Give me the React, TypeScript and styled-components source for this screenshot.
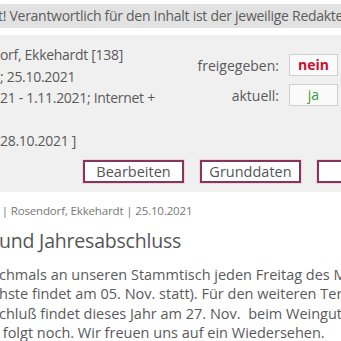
import React from 'react'
import styled, { createGlobalStyle } from 'styled-components'

const GlobalStyle = createGlobalStyle`
  html, body {
    margin: 0;
    padding: 0;
    background: #ffffff;
    overflow: hidden;
  }
  body {
    font-family: 'Open Sans', 'Noto Sans', 'DejaVu Sans', sans-serif;
    color: #5a5a5a;
  }
`

const Page = styled.div`
  width: 341px;
  height: 341px;
  overflow: hidden;
  padding-top: 4px;
  box-sizing: border-box;
`

const Notice = styled.div`
  height: 24px;
  line-height: 24px;
  background: #e2e2e2;
  font-size: 14px;
  letter-spacing: -0.28px;
  white-space: nowrap;
  margin-left: -2px;
  color: #5c5c5c;
`

const InfoPanel = styled.div`
  margin-top: 7px;
  background: #f0f0f0;
  padding: 9px 0 9px;
  overflow: hidden;
`

const InfoTop = styled.div`
  display: flex;
  justify-content: space-between;
`

const Meta = styled.div`
  font-size: 14px;
  letter-spacing: -0.3px;
  line-height: 21.5px;
  white-space: pre;
  min-height: 107px;
`

const StatusList = styled.div`
  display: grid;
  grid-template-columns: auto 49px;
  column-gap: 10px;
  row-gap: 8px;
  align-items: center;
  align-content: start;
  padding-top: 10px;
  margin-right: 3px;
`

const StatusLabel = styled.span`
  font-size: 14px;
  text-align: right;
`

const StatusBox = styled.span<{ $tone: 'no' | 'yes' }>`
  height: 20px;
  line-height: 20px;
  border: 1px solid #cfcfcf;
  background: #fafafa;
  text-align: center;
  font-size: 14px;
  font-weight: ${(p) => (p.$tone === 'no' ? 700 : 400)};
  color: ${(p) => (p.$tone === 'no' ? '#c8102e' : '#3f9a3f')};
`

const ButtonRow = styled.div`
  display: flex;
  gap: 16px;
  padding-left: 83px;
  margin-top: 8px;
  white-space: nowrap;
`

const ActionButton = styled.button`
  flex: 0 0 auto;
  width: 101px;
  height: 23px;
  padding: 0;
  background: #ffffff;
  border: 2px solid #86365a;
  box-shadow: 0 0 0 1px #f1d4de;
  font-family: inherit;
  font-size: 14.5px;
  color: #555555;
  line-height: 19px;
`

const Article = styled.div`
  padding-top: 11px;
`

const Byline = styled.div`
  font-size: 11.5px;
  letter-spacing: -0.15px;
  color: #777777;
  white-space: pre;
  margin-left: -4px;
`

const Heading = styled.h2`
  margin: 9px 0 0;
  font-size: 19.5px;
  letter-spacing: -0.2px;
  font-weight: 400;
  color: #555555;
  white-space: pre;
  margin-left: -1px;
`

const Body = styled.p`
  margin: 11px 0 0;
  font-size: 14.5px;
  line-height: 19.6px;
  white-space: pre;
  margin-left: -1px;
`

const metaLines = [
  'orf, Ekkehardt [138]',
  '; 25.10.2021',
  '21 - 1.11.2021; Internet +',
  ' ',
  '28.10.2021 ]',
]

const bodyLines = [
  'chmals an unseren Stammtisch jeden Freitag des Monats',
  'hste findet am 05. Nov. statt). Für den weiteren Termin',
  'chluß findet dieses Jahr am 27. Nov.  beim Weingut',
  ' folgt noch. Wir freuen uns auf ein Wiedersehen.',
]

export default function App() {
  return (
    <>
      <GlobalStyle />
      <Page>
        <Notice>t! Verantwortlich für den Inhalt ist der jeweilige Redakteur.</Notice>
        <InfoPanel>
          <InfoTop>
            <Meta>{metaLines.join('\n')}</Meta>
            <StatusList>
              <StatusLabel>freigegeben:</StatusLabel>
              <StatusBox $tone="no">nein</StatusBox>
              <StatusLabel>aktuell:</StatusLabel>
              <StatusBox $tone="yes">ja</StatusBox>
            </StatusList>
          </InfoTop>
          <ButtonRow>
            <ActionButton>Bearbeiten</ActionButton>
            <ActionButton>Grunddaten</ActionButton>
            <ActionButton>Info</ActionButton>
          </ButtonRow>
        </InfoPanel>
        <Article>
          <Byline>{'  | Rosendorf, Ekkehardt | 25.10.2021'}</Byline>
          <Heading>und Jahresabschluss</Heading>
          <Body>{bodyLines.join('\n')}</Body>
        </Article>
      </Page>
    </>
  )
}
